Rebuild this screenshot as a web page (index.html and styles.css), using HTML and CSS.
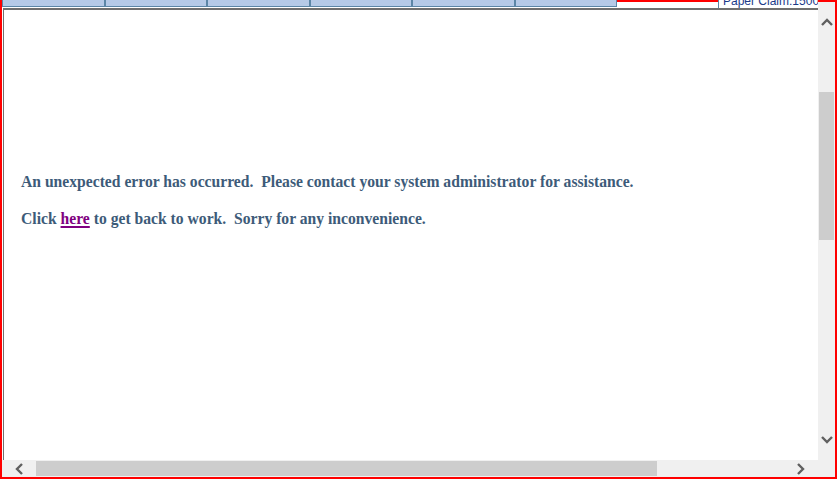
FILE: index.html
```html
<!DOCTYPE html>
<html>
<head>
<meta charset="utf-8">
<title>Error</title>
<link rel="stylesheet" href="styles.css">
</head>
<body>
<div class="frame">
  <div class="viewport">
    <div class="topbar">
      <div class="tabs">
        <div class="tab"></div>
        <div class="tab"></div>
        <div class="tab"></div>
        <div class="tab"></div>
        <div class="tab"></div>
        <div class="tab"></div>
      </div>
      <div class="gap"></div>
      <div class="claim"><span class="claim-text">Paper Claim:1500</span></div>
    </div>
    <div class="content">
      <p class="msg">An unexpected error has occurred.&nbsp; Please contact your system administrator for assistance.</p>
      <p class="msg">Click <a class="link" href="#">here</a> to get back to work.&nbsp; Sorry for any inconvenience.</p>
    </div>
  </div>
  <div class="vscroll">
    <div class="arrow-btn v-btn">
      <svg width="12" height="8" viewBox="0 0 12 8"><path d="M1 7 L6 2 L11 7" fill="none" stroke="#606060" stroke-width="2.4"/></svg>
    </div>
    <div class="v-track">
      <div class="v-thumb"></div>
    </div>
    <div class="arrow-btn v-btn">
      <svg width="12" height="8" viewBox="0 0 12 8"><path d="M1 1 L6 6 L11 1" fill="none" stroke="#606060" stroke-width="2.4"/></svg>
    </div>
  </div>
  <div class="hscroll">
    <div class="arrow-btn h-btn">
      <svg width="8" height="12" viewBox="0 0 8 12"><path d="M7 1 L2 6 L7 11" fill="none" stroke="#606060" stroke-width="2.4"/></svg>
    </div>
    <div class="h-track">
      <div class="h-thumb"></div>
    </div>
    <div class="arrow-btn h-btn">
      <svg width="8" height="12" viewBox="0 0 8 12"><path d="M1 1 L6 6 L1 11" fill="none" stroke="#606060" stroke-width="2.4"/></svg>
    </div>
  </div>
  <div class="corner"></div>
</div>
</body>
</html>
```

FILE: styles.css
```css
html, body {
  margin: 0;
  padding: 0;
  overflow: hidden;
  background: #ffffff;
}

.frame {
  width: 837px;
  height: 479px;
  box-sizing: border-box;
  border: 2px solid #ff0000;
  display: grid;
  grid-template-columns: 816px 17px;
  grid-template-rows: 458px 17px;
  background: #ffffff;
}

.viewport {
  display: flex;
  flex-direction: column;
  overflow: hidden;
  margin-top: -2px;
}

.topbar {
  display: flex;
  height: 10px;
  flex: none;
}

.tabs {
  display: flex;
  width: 615px;
  height: 7px;
  flex: none;
}

.tab {
  flex: 1;
  background: #b6cae7;
  border-left: 1px solid #5c86a6;
  border-right: 1px solid #5c86a6;
  border-bottom: 1px solid #5c86a6;
}

.gap {
  width: 101px;
  flex: none;
  border-top: 2px solid #ff0000;
  box-sizing: border-box;
  height: 10px;
}

.claim {
  flex: 1;
  height: 8px;
  background: #ffffff;
  border-left: 1px solid #5c86a6;
  overflow: hidden;
  box-sizing: border-box;
  padding-left: 4px;
}

.claim-text {
  display: block;
  font-family: "Liberation Sans", Arial, sans-serif;
  font-size: 12px;
  line-height: 12px;
  color: #1a3a8a;
  margin-top: -5px;
  white-space: nowrap;
}

.content {
  flex: 1;
  border-top: 2px solid #707070;
  border-left: 1px solid #707070;
  margin-left: 1px;
  padding: 162px 0 0 17px;
  margin-top: -2px;
}

.msg {
  margin: 0 0 18px 0;
  font-family: "Liberation Serif", "Times New Roman", serif;
  font-weight: bold;
  font-size: 15.65px;
  line-height: 19px;
  color: #3d5b79;
  white-space: nowrap;
}

.link {
  color: #800080;
  text-decoration: underline;
  text-decoration-thickness: 2px;
  text-underline-offset: 2px;
}

.vscroll {
  background: #f0f0f0;
  display: flex;
  flex-direction: column;
}

.arrow-btn {
  display: flex;
  align-items: center;
  justify-content: center;
  flex: none;
}

.v-btn {
  height: 40px;
}

.v-track {
  flex: 1;
  display: flex;
  flex-direction: column;
  padding: 50px 1px 0 1px;
}

.v-thumb {
  height: 148px;
  background: #cdcdcd;
}

.hscroll {
  background: #f0f0f0;
  display: flex;
}

.h-btn {
  width: 34px;
}

.h-track {
  flex: 1;
  display: flex;
  padding: 1px 0;
}

.h-thumb {
  width: 621px;
  background: #cdcdcd;
}

.corner {
  background: #f0f0f0;
}
```
